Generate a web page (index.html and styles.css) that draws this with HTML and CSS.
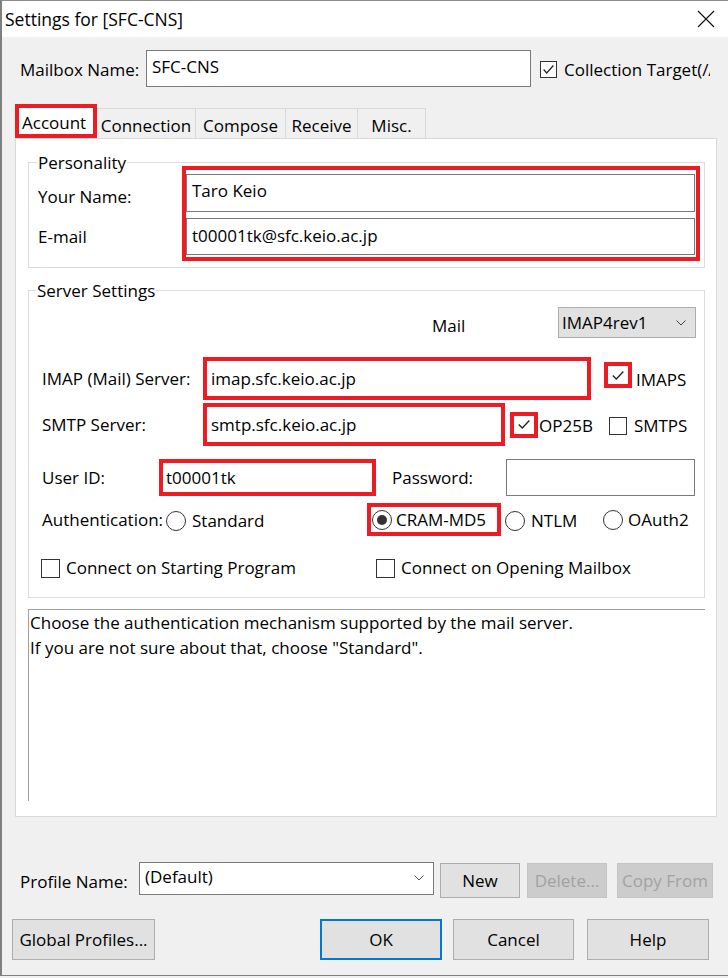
FILE: index.html
```html
<!DOCTYPE html>
<html lang="en">
<head>
<meta charset="utf-8">
<title>Settings for [SFC-CNS]</title>
<link rel="stylesheet" href="styles.css">
</head>
<body>
<div class="window">
  <div class="titlebar">
    <span class="title">Settings for [SFC-CNS]</span>
    <svg class="close" viewBox="0 0 18 18" width="18" height="18"><path d="M1 1 L17 17 M17 1 L1 17" stroke="#111" stroke-width="1.1" fill="none"/></svg>
  </div>
  <div class="client">
    <div class="mailbox-row">
      <span class="mailbox-lbl">Mailbox Name:</span>
      <div class="field mailbox-input">SFC-CNS</div>
      <span class="chk"><svg viewBox="0 0 17 17"><polyline points="3,8.5 6.5,12.5 14,4" fill="none" stroke="#222" stroke-width="1.4"/></svg></span>
      <span class="collection">Collection Target(/A)</span>
    </div>

    <div class="tabs">
      <div class="tab active">Account</div>
      <div class="tab t-conn">Connection</div>
      <div class="tab t-comp">Compose</div>
      <div class="tab t-recv">Receive</div>
      <div class="tab t-misc">Misc.</div>
    </div>

    <div class="panel">
      <div class="group personality">
        <div class="group-title">Personality</div>
        <div class="pers-body">
          <div class="pers-labels">
            <div class="pl-name">Your Name:</div>
            <div class="pl-mail">E-mail</div>
          </div>
          <div class="hl pers-box">
            <div class="field name-input">Taro Keio</div>
            <div class="field email-input">t00001tk@sfc.keio.ac.jp</div>
          </div>
        </div>
      </div>

      <div class="group server">
        <div class="group-title st">Server Settings</div>
        <div class="row mail-row">
          <span class="mail-lbl">Mail</span>
          <div class="combo proto">IMAP4rev1<svg class="chev" viewBox="0 0 10 6"><polyline points="0.5,0.5 5,5 9.5,0.5" fill="none" stroke="#444" stroke-width="1"/></svg></div>
        </div>
        <div class="row imap-row">
          <span class="lbl w161">IMAP (Mail) Server:</span>
          <div class="hl hl-field imap-box">imap.sfc.keio.ac.jp</div>
          <span class="hl-chk imaps-chk"><svg viewBox="0 0 17 17"><polyline points="2,8.5 6,12.5 14,4" fill="none" stroke="#222" stroke-width="1.5"/></svg></span>
          <span class="opt-text imaps-text">IMAPS</span>
        </div>
        <div class="row smtp-row">
          <span class="lbl w161">SMTP Server:</span>
          <div class="hl hl-field smtp-box">smtp.sfc.keio.ac.jp</div>
          <span class="hl-chk op-chk"><svg viewBox="0 0 17 17"><polyline points="2,8.5 6,12.5 14,4" fill="none" stroke="#222" stroke-width="1.5"/></svg></span>
          <span class="opt-text op-text">OP25B</span>
          <span class="chk smtps-chk"></span>
          <span class="opt-text smtps-text">SMTPS</span>
        </div>
        <div class="row user-row">
          <span class="lbl w117">User ID:</span>
          <div class="hl hl-field user-box">t00001tk</div>
          <span class="lbl pw-lbl">Password:</span>
          <div class="field pw-input"></div>
        </div>
        <div class="row auth-row">
          <span class="lbl w124">Authentication:</span>
          <span class="radio-opt std"><span class="radio"></span><span>Standard</span></span>
          <span class="hl cram"><span class="radio on"></span><span>CRAM-MD5</span></span>
          <span class="radio-opt ntlm"><span class="radio"></span><span>NTLM</span></span>
          <span class="radio-opt oauth"><span class="radio"></span><span>OAuth2</span></span>
        </div>
        <div class="row conn-row">
          <span class="chk-opt c1"><span class="chk big"></span><span>Connect on Starting Program</span></span>
          <span class="chk-opt c2"><span class="chk big"></span><span>Connect on Opening Mailbox</span></span>
        </div>
      </div>

      <div class="desc">
        <p>Choose the authentication mechanism supported by the mail server.</p>
        <p>If you are not sure about that, choose "Standard".</p>
      </div>
    </div>

    <div class="profile-row">
      <span class="profile-lbl">Profile Name:</span>
      <div class="combo profile-combo">(Default)<svg class="chev" viewBox="0 0 10 6"><polyline points="0.5,0.5 5,5 9.5,0.5" fill="none" stroke="#555" stroke-width="1"/></svg></div>
      <div class="btn b-new">New</div>
      <div class="btn disabled b-del">Delete...</div>
      <div class="btn disabled b-copy">Copy From</div>
    </div>

    <div class="button-row">
      <div class="btn b-global">Global Profiles...</div>
      <div class="btn default b-ok">OK</div>
      <div class="btn b-cancel">Cancel</div>
      <div class="btn b-help">Help</div>
    </div>
  </div>
</div>
</body>
</html>
```

FILE: styles.css
```css
* { box-sizing: border-box; margin: 0; padding: 0; }
html, body { width: 728px; height: 978px; overflow: hidden; }
body {
  background: #f0f0f0;
  font-family: "Open Sans", "Noto Sans", sans-serif;
  font-size: 17px;
  line-height: 24px;
  color: #000;
}
.window {
  width: 728px;
  height: 976px;
  border-left: 2px solid #7f7f7f;
  border-top: 1px solid #8a8a8a;
  border-bottom: 1px solid #7f7f7f;
  background: #f0f0f0;
  display: flex;
  flex-direction: column;
}
.titlebar {
  flex: none;
  height: 36px;
  background: #fff;
  display: flex;
  align-items: center;
  justify-content: space-between;
  padding: 0 13px 0 3px;
}
.title { font-size: 17.5px; }
.close { width: 18px; height: 18px; display: block; }
.client { flex: 1; }

/* mailbox row */
.mailbox-row { display: flex; align-items: center; margin-top: 13px; height: 37px; }
.mailbox-lbl { width: 144px; padding-left: 18px; flex: none; margin-top: 2px; }
.field {
  background: #fff;
  border: 1px solid #7a7a7a;
  padding-left: 5px;
  white-space: nowrap;
  overflow: hidden;
}
.mailbox-input { width: 385px; height: 37px; padding-top: 4px; flex: none; }
.chk {
  flex: none;
  width: 17px; height: 17px;
  border: 1px solid #333;
  background: #fff;
  display: flex; align-items: center; justify-content: center;
}
.chk svg { width: 15px; height: 15px; display: block; }
.mailbox-row .chk { margin-left: 9px; margin-top: 2px; }
.collection { margin-left: 7px; width: 146px; white-space: nowrap; overflow: hidden; margin-top: 2px; }

/* tabs */
.tabs { display: flex; align-items: flex-end; height: 34px; margin-top: 17px; margin-left: 13px; }
.tab {
  flex: none;
  height: 30px;
  border: 1px solid #d9d9d9;
  border-bottom: none;
  margin-left: -1px;
  background: #f0f0f0;
  text-align: center;
  padding-top: 3px;
  line-height: 28px;
  white-space: nowrap;
}
.tab.active {
  height: 34px;
  width: 82px;
  margin-left: 0;
  border: 4px solid #ed1c24;
  background: #fff;
  line-height: 26px;
  padding-top: 2px;
  text-align: left;
  padding-left: 3px;
  position: relative;
  z-index: 1;
}
.t-conn { width: 99px; margin-left: 0; border-left: none; }
.t-comp { width: 91px; }
.t-recv { width: 73px; }
.t-misc { width: 69px; }

/* panel */
.panel {
  margin-left: 13px;
  width: 702px;
  height: 679px;
  border: 1px solid #d9d9d9;
  background: #fff;
  padding-left: 12px;
  overflow: hidden;
}
.group {
  width: 677px;
  border: 1px solid #dcdcdc;
}
.group-title {
  width: fit-content;
  background: #fff;
  padding: 0 1px;
  line-height: 24px;
}
.personality { margin-top: 23px; height: 106px; padding-left: 9px; }
.personality .group-title { margin: -12px 0 -9px -1px; }
.pers-body { display: flex; height: 95px; }
.pers-labels { width: 144px; flex: none; }
.pl-name { margin-top: 19px; }
.pl-mail { margin-top: 16px; }
.hl { border: 4px solid #ed1c24; background: #fff; }
.pers-box { width: 518px; height: 95px; padding: 4px 1px 2px 0; }
.name-input { height: 38px; margin-bottom: 6px; line-height: 32px; }
.email-input { height: 37px; line-height: 33px; }

.server { margin-top: 22px; height: 308px; padding-left: 13px; }
.server .group-title { margin: -12px 0 0 -6px; }
.row { display: flex; align-items: center; }
.lbl { flex: none; white-space: nowrap; }
.w161 { width: 161px; }
.w117 { width: 117px; }
.w124 { width: 124px; }

.mail-row { margin-top: 4px; height: 31px; }
.mail-lbl { margin-left: 390px; width: 126px; margin-top: 7px; }
.combo {
  position: relative;
  flex: none;
  display: flex;
  align-items: center;
  justify-content: space-between;
  white-space: nowrap;
}
.proto {
  width: 138px; height: 31px;
  background: #e1e1e1;
  border: 1px solid #adadad;
  padding: 0 9px 0 3px;
}
.chev { width: 10px; height: 6px; display: block; }

.hl-field { flex: none; padding-left: 4px; white-space: nowrap; }
.imap-row { margin-top: 19px; height: 43px; }
.imap-box { width: 388px; height: 43px; line-height: 35px; }
.hl-chk {
  flex: none;
  width: 28px; height: 26px;
  border: 4px solid #ed1c24;
  background: #fff;
  display: flex; align-items: center; justify-content: center;
}
.hl-chk svg { width: 15px; height: 15px; display: block; }
.imaps-chk { margin-left: 13px; margin-top: -7px; }
.opt-text { white-space: nowrap; }
.imaps-text { margin-left: 4px; margin-top: 3px; }

.smtp-row { margin-top: 3px; height: 43px; }
.smtp-box { width: 302px; height: 43px; line-height: 35px; }
.op-chk { margin-left: 5px; }
.op-text { margin-left: 1px; margin-top: 3px; }
.smtps-chk { width: 18px; height: 18px; margin-left: 16px; margin-top: 3px; }
.smtps-text { margin-left: 7px; margin-top: 3px; }

.user-row { margin-top: 13px; height: 37px; }
.user-box { width: 217px; height: 37px; line-height: 29px; padding-left: 3px; }
.pw-lbl { margin-left: 16px; width: 114px; }
.pw-input { width: 189px; height: 37px; flex: none; }

.auth-row { margin-top: 7px; height: 33px; }
.radio {
  flex: none;
  width: 20px; height: 20px;
  border: 1px solid #333;
  border-radius: 50%;
  background: #fff;
  display: flex; align-items: center; justify-content: center;
}
.radio.on::after {
  content: "";
  width: 10px; height: 10px;
  border-radius: 50%;
  background: #333;
}
.radio-opt { display: flex; align-items: center; flex: none; white-space: nowrap; }
.radio-opt .radio { margin-right: 6px; }
.std { width: 201px; margin-top: 3px; }
.cram {
  flex: none;
  width: 134px; height: 33px;
  display: flex; align-items: center;
  padding-left: 1px;
  white-space: nowrap;
}
.cram .radio { margin-right: 4px; }
.ntlm { margin-left: 4px; width: 98px; margin-top: 3px; }
.oauth { margin-top: 1px; }
.oauth .radio { margin-right: 5px; }

.conn-row { margin-top: 22px; height: 20px; margin-left: -1px; }
.chk-opt { display: flex; align-items: center; flex: none; white-space: nowrap; }
.chk.big { width: 19px; height: 19px; margin-right: 6px; }
.c1 { width: 335px; }

.desc {
  margin-top: 11px;
  width: 677px;
  height: 192px;
  border-top: 1px solid #a0a0a0;
  border-left: 1px solid #a0a0a0;
  padding-left: 1px;
  line-height: 25px;
}

/* profile row */
.profile-row { display: flex; align-items: flex-start; margin-top: 45px; height: 36px; }
.profile-lbl { width: 137px; padding-left: 18px; margin-top: 8px; flex: none; white-space: nowrap; }
.profile-combo {
  width: 295px; height: 33px;
  background: #fff;
  border: 1px solid #7a7a7a;
  padding: 0 9px 0 5px;
  align-items: flex-start;
  padding-top: 2px;
}
.profile-combo .chev { margin-top: 10px; }
.btn {
  flex: none;
  display: flex; align-items: center; justify-content: center;
  background: #e1e1e1;
  border: 1px solid #adadad;
  white-space: nowrap;
}
.btn.disabled { background: #cccccc; border-color: #c4c4c4; color: #a2a2a2; }
.btn.default { border: 2px solid #0078d7; }
.b-new { margin: 1px 0 0 6px; width: 80px; height: 35px; }
.b-del { margin: 1px 0 0 7px; width: 80px; height: 35px; }
.b-copy { margin: 1px 0 0 10px; width: 96px; height: 35px; }

.button-row { display: flex; margin-top: 21px; height: 41px; }
.button-row .btn { height: 41px; }
.b-global { margin-left: 10px; width: 143px; }
.b-ok { margin-left: 165px; width: 122px; }
.b-cancel { margin-left: 11px; width: 121px; }
.b-help { margin-left: 13px; width: 122px; }
```
